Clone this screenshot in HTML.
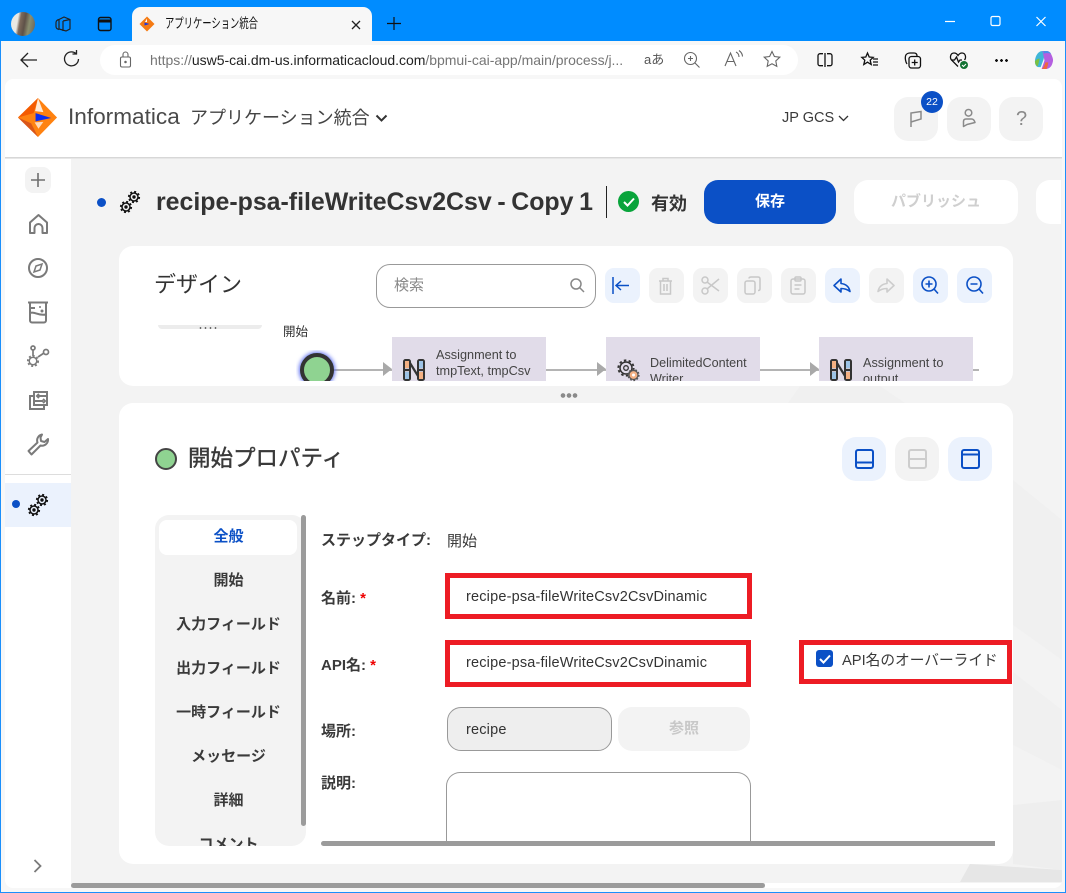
<!DOCTYPE html>
<html lang="ja"><head><meta charset="utf-8"><title>アプリケーション統合</title>
<style>
*{box-sizing:border-box}
html,body{margin:0;padding:0;width:1066px;height:893px;overflow:hidden;background:#1b8ffb}
body{position:relative;font-family:"Liberation Sans","Noto Sans CJK JP",sans-serif;color:#333}
.a{position:absolute}
.t{position:absolute;white-space:nowrap;line-height:1}
svg{position:absolute;overflow:visible}
.ib{position:absolute;width:35px;height:35px;border-radius:9px;background:#ebf2fd}
.ib.d{background:#f3f3f3}
.tab{position:absolute;left:0;width:100%;text-align:center;font-size:15px;font-weight:700;color:#3a3a3a;line-height:1}
.red{position:absolute;border:5px solid #ed1c24}
</style></head><body>
<!-- window background -->
<div class="a" style="left:1px;top:41px;width:1064px;height:851px;background:#f7f7f7"></div>
<!-- title bar -->
<div class="a" style="left:0;top:0;width:1066px;height:41px;background:#008cff"></div>
<div class="a" style="left:11px;top:12px;width:24px;height:24px;border-radius:50%;background:linear-gradient(100deg,#e9e9e4 0 28%,#7d6a5c 38%,#5e5148 55%,#8a8f70 72%,#68605a 100%)"></div>
<svg style="left:54px;top:15px" width="18" height="18" fill="none" stroke="#222" stroke-width="1.200"><path d="M5 4.500l5-2.500 6 2.500v9.500l-4 2-7-2z M9 6l7-1.500M9 6v10M5 4.500c-2 .5-3 1.500-3 3v4c0 1.500 1 2.500 3 3"/></svg>
<svg style="left:97px;top:16px" width="18" height="16" fill="none" stroke="#111" stroke-width="1.400"><rect x="1.500" y="1.500" width="12.500" height="13" rx="2"/><path d="M1.500 5h12.500" stroke-width="3"/></svg>
<div class="a" style="left:132px;top:7px;width:240px;height:35px;background:#f7f7f7;border-radius:9px 9px 0 0"></div>
<svg style="left:139px;top:16px" width="16" height="16" viewBox="0 0 16 16"><path d="M8 .5L15.500 8 8 15.500.5 8z" fill="#f57a12"/><path d="M5.500 6.500l5 1.500-5 1.500z" fill="#1a35e0"/><path d="M8 2.500L6 6h2z" fill="#fff"/></svg>
<div class="t" style="left:165px;top:17px;font-size:13.500px;color:#111;transform:scaleX(.69);transform-origin:0 0">アプリケーション統合</div>
<svg style="left:350px;top:19px" width="12" height="12" stroke="#222" stroke-width="1.300"><path d="M2 2l8 8M10 2l-8 8"/></svg>
<svg style="left:387px;top:17px" width="14" height="14" stroke="#111" stroke-width="1.200"><path d="M7 0v13M0 6.500h14"/></svg>
<svg style="left:945px;top:20px" width="110" height="12" fill="none" stroke="#fff" stroke-width="1.200"><path d="M0 1.500h10"/><rect x="46" y="-3.500" width="9" height="9" rx="1.500"/><path d="M91.500-3l9 9M100.500-3l-9 9"/></svg>
<!-- toolbar -->
<svg style="left:20px;top:51px" width="18" height="18" fill="none" stroke="#222" stroke-width="1.300"><path d="M1 9h16M8 2L1 9l7 7"/></svg>
<svg style="left:63px;top:50px" width="18" height="18" fill="none" stroke="#222" stroke-width="1.300"><path d="M15.500 9a7 7 0 1 1-2.500-5.500M13.500 0v4h-4"/></svg>
<div class="a" style="left:100px;top:45px;width:698px;height:30px;background:#fff;border-radius:15px"></div>
<svg style="left:119px;top:51px" width="14" height="18" fill="none" stroke="#666" stroke-width="1.100"><rect x="1.500" y="6" width="10" height="10" rx="1.500"/><path d="M4 6V3.500a2.500 2.500 0 0 1 5 0V6"/><circle cx="6.500" cy="11" r=".7" fill="#666"/></svg>
<div class="t" style="left:150px;top:53px;font-size:14px;letter-spacing:-.02px;color:#757575">https://<span style="color:#222">usw5-cai.dm-us.informaticacloud.com</span>/bpmui-cai-app/main/process/j...</div>
<div class="t" style="left:644px;top:53px;font-size:13px;color:#555">aあ</div>
<svg style="left:683px;top:51px" width="18" height="18" fill="none" stroke="#666" stroke-width="1.100"><circle cx="7.500" cy="7.500" r="6"/><path d="M12 12l4.500 4.500M5 7.500h5M7.500 5v5"/></svg>
<svg style="left:724px;top:50px" width="20" height="18" fill="none" stroke="#666" stroke-width="1.100"><path d="M1 16L6.500 3 12 16M3 11.500h7M12 2c2 1 3 3 3 5M15 .5c2 1.500 3.500 3.500 3.500 6"/></svg>
<svg style="left:763px;top:50px" width="18" height="18" fill="none" stroke="#666" stroke-width="1.100"><path d="M9 1.500l2.400 5 5.400.7-4 3.800 1 5.400L9 13.800l-4.800 2.600 1-5.400-4-3.800 5.400-.7z"/></svg>
<svg style="left:817px;top:53px" width="16" height="14" fill="none" stroke="#111" stroke-width="1.300"><path d="M6 .7H3a2 2 0 0 0-2 2v8a2 2 0 0 0 2 2h3M10 .7h3a2 2 0 0 1 2 2v8a2 2 0 0 1-2 2h-3M8 0v14"/></svg>
<svg style="left:861px;top:52px" width="17" height="16" fill="none" stroke="#111" stroke-width="1.300"><path d="M6.500 1l1.700 4 4 .4-3 2.800 1 4.300-3.700-2.300-3.700 2.300 1-4.300-3-2.800 4-.4z"/><path d="M12 7h5M12 10h5M12 13h5"/></svg>
<svg style="left:904px;top:52px" width="18" height="17" fill="none" stroke="#111" stroke-width="1.300"><path d="M3 12C1.500 10 1 6 1.500 4 2 2 4 1 6 1h4c2 0 3 1 3 3"/><rect x="5" y="4.500" width="11.500" height="11.500" rx="2.500"/><path d="M10.700 7.500v6M7.700 10.500h6"/></svg>
<svg style="left:949px;top:51px" width="20" height="19" fill="none" stroke="#111" stroke-width="1.300"><path d="M9 15.500L2.500 9C.5 6.500 1.500 2 5 2c2 0 3.200 1 4 2.500C10 3 11 2 13 2c3.500 0 4.500 4.500 2.500 7M2 9h3.500l2-3 2 5 1.500-2h2"/><circle cx="15" cy="14" r="4" fill="#137333" stroke="none"/><path d="M13 14l1.500 1.500 2.500-2.500" stroke="#fff" stroke-width="1"/></svg>
<div class="a" style="left:994px;top:59px;width:15px;height:3px;background:radial-gradient(circle,#111 1.300px,transparent 1.500px) 0 0/5px 3px"></div>
<svg style="left:1033px;top:50px" width="22" height="20" viewBox="0 0 21 21"><path d="M1 12C1 7 4 1 9 1h3l-2 9-3 8H5c-3 0-4-3-4-6z" fill="#3fb6d8"/><path d="M9 1h4c3 0 5 2 6.500 7 .5 2 1 3-.5 7-1 3-4 5-6 5H8l3-9z" fill="#b45fe0"/><path d="M1 12c1-2 3-3 5-3l-2 8c-2 0-3-3-3-5z" fill="#7bc043"/><path d="M13 20H8c2-1 3-4 4-7l3 0c-.5 3-1 6-2 7z" fill="#f0663e"/><path d="M10 1h3c2 0 4 1 5 3-3-1-6-1-8 0z" fill="#4d8fe8"/></svg>
<!-- page -->
<div class="a" style="left:5px;top:79px;width:1057px;height:809px;background:#f3f3f3;border-radius:8px;overflow:hidden">
 <svg style="left:-5px;top:-79px" width="1066" height="893"><path d="M788 403L800 386H880L905 403z" fill="#f0f0f0"/><path d="M1013 480L1062 520V660L1013 625z" fill="#f0f0f0"/><path d="M1013 672L1062 710V770L1013 745z" fill="#f0f0f0"/><path d="M1013 805L1062 800V870L1013 864z" fill="#eeeeee"/><path d="M970 864L1062 870V882H960z" fill="#e6e6e6"/></svg>
 <div class="a" style="left:0;top:0;width:1057px;height:78px;background:#fff"></div>
 <div class="a" style="left:0;top:78px;width:1057px;height:2px;background:linear-gradient(#cfcfcf,#efefef)"></div>
 <div class="a" style="left:0;top:80px;width:66px;height:729px;background:#fff"></div>
 <div class="a" style="left:0;top:395px;width:66px;height:1px;background:#ddd"></div>
 <div class="a" style="left:0;top:404px;width:66px;height:44px;background:#ebf2fd"></div>
 <div class="a" style="left:66px;top:804px;width:694px;height:5px;background:#9b9b9b;border-radius:3px"></div>
 <div class="a" style="left:760px;top:804px;width:297px;height:5px;background:#fff"></div>
</div>
<!-- header -->
<svg style="left:18px;top:98px" width="40" height="40" viewBox="0 0 41 41"><path d="M20.500 0L40 20 20.500 40 0 20z" fill="#ff8210"/><path d="M20.500 0L0 20l16-4.500z" fill="#f45a00"/><path d="M0 20l20.500 20-7-14z" fill="#d9561a"/><path d="M20.500 0l-3 13.500 8.500 1z" fill="#ffe9d6"/><path d="M17 25l9-.5-5 7z" fill="#ffe9d6" opacity=".85"/><path d="M18 15.500L34 20.500 18 24z" fill="#0c2ef0"/></svg>
<div class="t" style="left:68px;top:106px;font-size:22.600px;color:#4a4a4a">Informatica</div>
<div class="t" style="left:190px;top:109px;font-size:18px;color:#444">アプリケーション統合</div>
<svg style="left:375px;top:114px" width="13" height="9" fill="none" stroke="#333" stroke-width="2"><path d="M1.500 1.500L6.500 6.500 11.500 1.500"/></svg>
<div class="t" style="left:782px;top:111px;font-size:14.500px;color:#3a3a3a">JP GCS</div>
<svg style="left:838px;top:115px" width="11" height="7" fill="none" stroke="#333" stroke-width="1.300"><path d="M1 1l4.500 4.500L10 1"/></svg>
<div class="ib d" style="left:894px;top:97px;width:44px;height:44px;border-radius:14px"></div>
<div class="ib d" style="left:947px;top:97px;width:44px;height:44px;border-radius:14px"></div>
<div class="ib d" style="left:999px;top:97px;width:44px;height:44px;border-radius:14px"></div>
<svg style="left:908px;top:110px" width="16" height="18" fill="none" stroke="#8a8a8a" stroke-width="1.500"><path d="M3 17V3l10-1.500V9L3 12"/></svg>
<div class="a" style="left:921px;top:91px;width:22px;height:22px;border-radius:50%;background:#0b50c6;color:#fff;font-size:10.500px;line-height:22px;text-align:center">22</div>
<svg style="left:960px;top:108px" width="18" height="20" fill="none" stroke="#8a8a8a" stroke-width="1.500"><circle cx="8.500" cy="4.800" r="3.300"/><path d="M3.500 18.500V13.500Q3.500 11 6 11H11.500Q14 11 15 14.500L7 16.500z" stroke-linejoin="round"/></svg>
<div class="t" style="left:1016px;top:109px;font-size:20px;color:#8a8a8a">?</div>
<!-- sidebar -->
<div class="a" style="left:25px;top:167px;width:26px;height:26px;border-radius:8px;background:#f3f3f3"></div>
<svg style="left:31px;top:173px" width="14" height="14" stroke="#6f6f6f" stroke-width="1.600"><path d="M7 0v14M0 7h14"/></svg>
<svg style="left:28px;top:213px" width="21" height="22" fill="none" stroke="#7a7a7a" stroke-width="2"><path d="M2 20h4.500v-5a4 4 0 0 1 8 0v5H19V9.500L10.500 2 2 9.500z" stroke-linejoin="round"/></svg>
<svg style="left:27px;top:257px" width="22" height="22" fill="none" stroke="#7a7a7a" stroke-width="2"><circle cx="11" cy="11" r="9"/><path d="M7 15l2-6 6-2-2 6z" stroke-width="1.500"/></svg>
<svg style="left:27px;top:301px" width="22" height="23" fill="none" stroke="#7a7a7a" stroke-width="2"><path d="M1 1.500h20M3 1.500v18a2 2 0 0 0 2 2h12a2 2 0 0 0 2-2V1.500M3 12c5-2 7 3 16 1.500M3 7h5"/><circle cx="13" cy="6" r="1" fill="#7a7a7a" stroke="none"/><circle cx="15" cy="10" r="1.500" fill="#7a7a7a" stroke="none"/></svg>
<svg style="left:27px;top:345px" width="23" height="24" fill="none" stroke="#7a7a7a" stroke-width="1.700"><circle cx="6" cy="16" r="3.800" stroke-width="1.500"/><circle cx="6" cy="16" r="5.200" stroke-width="1.700" stroke-dasharray="2 2"/><circle cx="6" cy="3" r="2"/><circle cx="19" cy="7" r="2.500"/><path d="M6 5v6M11 12l6-4"/></svg>
<svg style="left:28px;top:390px" width="21" height="21" fill="none" stroke="#7a7a7a" stroke-width="2"><path d="M6 15V2h13v13H6zM6 6H2v13h14v-4M10 6h8M7 11h8M11 4L9 6l2 2M15 9l2 2-2 2"/></svg>
<svg style="left:27px;top:433px" width="23" height="23" fill="none" stroke="#7a7a7a" stroke-width="2"><path d="M15 1.500a6 6 0 0 0-4.500 8L1.500 18l3 3.500 9-9a6 6 0 0 0 7.500-6.500l-3.500 3-3.500-1-.5-3.500z" stroke-linejoin="round"/></svg>
<div class="a" style="left:12px;top:500px;width:8px;height:8px;border-radius:50%;background:#0b50c6"></div>
<svg style="left:28px;top:494px" width="21" height="22" fill="none" stroke="#111"><circle cx="14" cy="6" r="4" stroke-width="1.500"/><circle cx="14" cy="6" r="5.300" stroke-width="1.600" stroke-dasharray="2 2.160"/><circle cx="14" cy="6" r="1.200" fill="#111"/><circle cx="6" cy="16" r="4" stroke-width="1.500"/><circle cx="6" cy="16" r="5.300" stroke-width="1.600" stroke-dasharray="2 2.160"/><circle cx="6" cy="16" r="1.200" fill="#111"/></svg>
<svg style="left:33px;top:859px" width="10" height="14" fill="none" stroke="#7a7a7a" stroke-width="1.800"><path d="M1.500 1l6 6-6 6"/></svg>
<!-- title row -->
<div class="a" style="left:97px;top:198px;width:9px;height:9px;border-radius:50%;background:#0b50c6"></div>
<svg style="left:120px;top:191px" width="21" height="22" fill="none" stroke="#111"><circle cx="14" cy="6" r="4" stroke-width="1.500"/><circle cx="14" cy="6" r="5.300" stroke-width="1.600" stroke-dasharray="2 2.160"/><circle cx="14" cy="6" r="1.200" fill="#111"/><circle cx="6" cy="16" r="4" stroke-width="1.500"/><circle cx="6" cy="16" r="5.300" stroke-width="1.600" stroke-dasharray="2 2.160"/><circle cx="6" cy="16" r="1.200" fill="#111"/></svg>
<div class="t" style="left:156px;top:190px;font-size:24.900px;font-weight:700;color:#333;word-spacing:-1.300px">recipe-psa-fileWriteCsv2Csv - Copy 1</div>
<div class="a" style="left:606px;top:186px;width:1px;height:32px;background:#222"></div>
<div class="a" style="left:618px;top:191px;width:21px;height:21px;border-radius:50%;background:#09a43b"></div>
<svg style="left:623px;top:197px" width="12" height="10" fill="none" stroke="#fff" stroke-width="2"><path d="M1 5l3.500 3.500L11 1.500"/></svg>
<div class="t" style="left:651px;top:195px;font-size:18px;font-weight:700;color:#333">有効</div>
<div class="a" style="left:704px;top:180px;width:132px;height:44px;border-radius:14px;background:#0b50c6;color:#fff;font-size:15px;font-weight:700;text-align:center;line-height:44px">保存</div>
<div class="a" style="left:854px;top:180px;width:164px;height:44px;border-radius:14px;background:#fff;color:#cfcfcf;font-size:15px;font-weight:700;text-align:center;line-height:44px">パブリッシュ</div>
<div class="a" style="left:1036px;top:180px;width:25px;height:44px;border-radius:14px 0 0 14px;background:#fff"></div>
<!-- design card -->
<div class="a" style="left:119px;top:246px;width:894px;height:140px;background:#fff;border-radius:14px"></div>
<div class="t" style="left:154px;top:274px;font-size:22px;color:#333">デザイン</div>
<div class="a" style="left:376px;top:264px;width:220px;height:44px;border:1px solid #999;border-radius:14px;background:#fff"></div>
<div class="t" style="left:394px;top:278px;font-size:15px;color:#8a8a8a">検索</div>
<svg style="left:570px;top:278px" width="15" height="15" fill="none" stroke="#888" stroke-width="1.500"><circle cx="6" cy="6" r="5"/><path d="M9.500 9.500L14 14"/></svg>
<div class="ib" style="left:605px;top:268px"></div>
<div class="ib d" style="left:649px;top:268px"></div>
<div class="ib d" style="left:693px;top:268px"></div>
<div class="ib d" style="left:737px;top:268px"></div>
<div class="ib d" style="left:781px;top:268px"></div>
<div class="ib" style="left:825px;top:268px"></div>
<div class="ib d" style="left:869px;top:268px"></div>
<div class="ib" style="left:913px;top:268px"></div>
<div class="ib" style="left:957px;top:268px"></div>
<svg style="left:612px;top:277px" width="20" height="18" fill="none" stroke="#0b50c6" stroke-width="1.500"><path d="M1 0v17M17 8.500H4M9 4L4 8.500 9 13"/></svg>
<svg style="left:657px;top:277px" width="18" height="18" fill="none" stroke="#c8c8c8" stroke-width="1.500"><path d="M2 4h13M6 4V1.500h5V4M3.500 4v13h10V4M7 7v7M10 7v7"/></svg>
<svg style="left:701px;top:276px" width="20" height="19" fill="none" stroke="#c8c8c8" stroke-width="1.500"><circle cx="4" cy="4" r="3"/><circle cx="4" cy="15" r="3"/><path d="M6 6l12 9M6 13L18 3"/></svg>
<svg style="left:744px;top:276px" width="18" height="19" fill="none" stroke="#c8c8c8" stroke-width="1.500"><rect x="1" y="5" width="10" height="13" rx="2"/><path d="M5 2.500Q5 1 7 1h7q2 0 2 2v10q0 1.500-2 1.500"/></svg>
<svg style="left:790px;top:276px" width="17" height="19" fill="none" stroke="#c8c8c8" stroke-width="1.500"><rect x="1" y="3" width="14" height="15" rx="2"/><rect x="5" y="1" width="6" height="4" rx="1"/><path d="M4.500 9h7M4.500 13h5"/></svg>
<svg style="left:833px;top:278px" width="18" height="16" fill="none" stroke="#0b50c6" stroke-width="1.600"><path d="M8 1L1 7.500 8 14v-3.500c4 0 6.500 1 9 3-1-5-4-7.500-9-8z" stroke-linejoin="round"/></svg>
<svg style="left:877px;top:278px" width="18" height="16" fill="none" stroke="#cdcdcd" stroke-width="1.600"><path d="M10 1l7 6.500L10 14v-3.500c-4 0-6.500 1-9 3 1-5 4-7.500 9-8z" stroke-linejoin="round"/></svg>
<svg style="left:921px;top:276px" width="18" height="19" fill="none" stroke="#0b50c6" stroke-width="1.600"><circle cx="8" cy="8" r="7"/><path d="M13 13l4 4.500M4.500 8h7M8 4.500v7"/></svg>
<svg style="left:966px;top:276px" width="18" height="19" fill="none" stroke="#0b50c6" stroke-width="1.600"><circle cx="8" cy="8" r="7"/><path d="M13 13l4 4.500M4.500 8h7"/></svg>
<!-- canvas -->
<div class="a" style="left:158px;top:325px;width:104px;height:4px;background:#ececec;border-radius:0 0 8px 8px"></div>
<div class="a" style="left:198px;top:327px;width:20px;height:2px;background:radial-gradient(circle,#555 .7px,transparent 1px) 0 0/5px 2px"></div>
<div class="t" style="left:283px;top:326px;font-size:12.500px;color:#333">開始</div>
<div class="a" style="left:332px;top:369px;width:647px;height:2px;background:#b4b4b4"></div>
<div class="a" style="left:296px;top:350px;width:44px;height:31px;overflow:hidden"><div class="a" style="left:4px;top:3px;width:34px;height:34px;border-radius:50%;background:#8fd391;border:4px solid #333;box-shadow:0 0 4px 1px #5a6cf0"></div></div>
<svg style="left:383px;top:362px" width="9" height="14"><path d="M0 0l9 7-9 7z" fill="#a9a9a9"/></svg>
<svg style="left:597px;top:362px" width="9" height="14"><path d="M0 0l9 7-9 7z" fill="#a9a9a9"/></svg>
<svg style="left:810px;top:362px" width="9" height="14"><path d="M0 0l9 7-9 7z" fill="#a9a9a9"/></svg>
<div class="a" style="left:392px;top:337px;width:154px;height:44px;background:#e1dce9"></div>
<div class="a" style="left:606px;top:337px;width:154px;height:44px;background:#e1dce9"></div>
<div class="a" style="left:819px;top:337px;width:154px;height:44px;background:#e1dce9"></div>
<svg style="left:403px;top:359px" width="22" height="22" fill="none" stroke="#333" stroke-width="2"><rect x="1" y="1" width="6" height="20" rx="1.500"/><rect x="15" y="1" width="6" height="20" rx="1.500"/><rect x="2" y="2" width="4" height="7" fill="#f4b183" stroke="none"/><rect x="2" y="13" width="4" height="7" fill="#9dc3e6" stroke="none"/><rect x="16" y="2" width="4" height="7" fill="#9dc3e6" stroke="none"/><rect x="16" y="13" width="4" height="7" fill="#f4b183" stroke="none"/><path d="M1 11h6M15 11h6M7 4l8 13" stroke-width="2.200"/></svg>
<svg style="left:830px;top:359px" width="22" height="22" fill="none" stroke="#333" stroke-width="2"><rect x="1" y="1" width="6" height="20" rx="1.500"/><rect x="15" y="1" width="6" height="20" rx="1.500"/><rect x="2" y="2" width="4" height="7" fill="#f4b183" stroke="none"/><rect x="2" y="13" width="4" height="7" fill="#9dc3e6" stroke="none"/><rect x="16" y="2" width="4" height="7" fill="#9dc3e6" stroke="none"/><rect x="16" y="13" width="4" height="7" fill="#f4b183" stroke="none"/><path d="M1 11h6M15 11h6M7 4l8 13" stroke-width="2.200"/></svg>
<svg style="left:617px;top:359px" width="23" height="22" fill="none"><circle cx="9" cy="9" r="6" stroke="#333" stroke-width="1.500"/><circle cx="9" cy="9" r="7.700" stroke="#333" stroke-width="1.800" stroke-dasharray="2.500 2.340"/><circle cx="9" cy="9" r="2.300" stroke="#333" stroke-width="1.300"/><circle cx="16.500" cy="16" r="4.500" fill="#f4b183" stroke="#555" stroke-width="1.200"/><circle cx="16.500" cy="16" r="5.500" stroke="#555" stroke-width="1.200" stroke-dasharray="1.800 1.660"/><circle cx="16.500" cy="16" r="1.500" fill="#fff"/></svg>
<div class="t" style="left:436px;top:347px;font-size:12.700px;line-height:16px;color:#444;width:108px;height:34px;overflow:hidden">Assignment to<br>tmpText, tmpCsv</div>
<div class="t" style="left:650px;top:355px;font-size:12.600px;line-height:16px;color:#444;height:26px;overflow:hidden">DelimitedContent<br>Writer</div>
<div class="t" style="left:863px;top:355px;font-size:12.700px;line-height:16px;color:#444;height:26px;overflow:hidden">Assignment to<br>output</div>
<div class="a" style="left:560px;top:393px;width:18px;height:5px;background:radial-gradient(circle,#8a8a8a 2.100px,transparent 2.500px) 0 0/6px 5px"></div>
<!-- properties card -->
<div class="a" style="left:119px;top:403px;width:894px;height:461px;background:#fff;border-radius:14px"></div>
<div class="a" style="left:155px;top:448px;width:22px;height:22px;border-radius:50%;background:#8fd391;border:2px solid #444"></div>
<div class="t" style="left:188px;top:448px;font-size:22.500px;color:#3a3a3a;-webkit-text-stroke:.4px #3a3a3a">開始プロパティ</div>
<div class="ib" style="left:842px;top:437px;width:44px;height:44px;border-radius:14px"></div>
<div class="ib d" style="left:895px;top:437px;width:44px;height:44px;border-radius:14px"></div>
<div class="ib" style="left:948px;top:437px;width:44px;height:44px;border-radius:14px"></div>
<svg style="left:855px;top:449px" width="19" height="20" fill="none" stroke="#0b50c6" stroke-width="2"><rect x="1" y="1" width="17" height="18" rx="2"/><path d="M1 13.500h17"/></svg>
<svg style="left:908px;top:449px" width="19" height="20" fill="none" stroke="#cdcdcd" stroke-width="2"><rect x="1" y="1" width="17" height="18" rx="2"/><path d="M1 10h17"/></svg>
<svg style="left:961px;top:449px" width="19" height="20" fill="none" stroke="#0b50c6" stroke-width="2"><rect x="1" y="1" width="17" height="18" rx="2"/><path d="M1 5.500h17"/></svg>
<!-- tabs -->
<div class="a" style="left:155px;top:515px;width:151px;height:331px;background:#f3f3f3;border-radius:14px;overflow:hidden">
 <div class="a" style="left:4px;top:5px;width:138px;height:35px;background:#fff;border-radius:8px"></div>
 <div class="tab" style="top:14px;width:147px;color:#0b50c6">全般</div>
 <div class="tab" style="top:58px;width:147px">開始</div>
 <div class="tab" style="top:102px;width:147px">入力フィールド</div>
 <div class="tab" style="top:146px;width:147px">出力フィールド</div>
 <div class="tab" style="top:190px;width:147px">一時フィールド</div>
 <div class="tab" style="top:234px;width:147px">メッセージ</div>
 <div class="tab" style="top:278px;width:147px">詳細</div>
 <div class="tab" style="top:322px;width:147px">コメント</div>
</div>
<div class="a" style="left:301px;top:515px;width:5px;height:311px;background:#9b9b9b;border-radius:3px"></div>
<!-- form -->
<div class="t" style="left:321px;top:533px;font-size:15px;font-weight:700;color:#3a3a3a">ステップタイプ:</div>
<div class="t" style="left:447px;top:534px;font-size:15px;color:#3a3a3a">開始</div>
<div class="t" style="left:321px;top:591px;font-size:15px;font-weight:700;color:#3a3a3a">名前: <span style="color:#e00">*</span></div>
<div class="t" style="left:321px;top:658px;font-size:15px;font-weight:700;color:#3a3a3a">API名: <span style="color:#e00">*</span></div>
<div class="t" style="left:321px;top:724px;font-size:15px;font-weight:700;color:#3a3a3a">場所:</div>
<div class="t" style="left:321px;top:776px;font-size:15px;font-weight:700;color:#3a3a3a">説明:</div>
<div class="red" style="left:445px;top:573px;width:307px;height:46px"></div>
<div class="red" style="left:445px;top:640px;width:306px;height:47px"></div>
<div class="red" style="left:799px;top:640px;width:213px;height:44px"></div>
<div class="t" style="left:466px;top:590px;font-size:14.500px;letter-spacing:.18px;color:#333">recipe-psa-fileWriteCsv2CsvDinamic</div>
<div class="t" style="left:466px;top:656px;font-size:14.500px;letter-spacing:.18px;color:#333">recipe-psa-fileWriteCsv2CsvDinamic</div>
<div class="a" style="left:816px;top:650px;width:17px;height:17px;border-radius:3px;background:#0b50c6"></div>
<svg style="left:819px;top:654px" width="12" height="10" fill="none" stroke="#fff" stroke-width="2"><path d="M1 5l3.500 3.500L11 1.500"/></svg>
<div class="t" style="left:842px;top:654px;font-size:14.700px;color:#3a3a3a">API名のオーバーライド</div>
<div class="a" style="left:447px;top:707px;width:165px;height:44px;background:#eee;border:1px solid #999;border-radius:14px"></div>
<div class="t" style="left:466px;top:723px;font-size:14.500px;letter-spacing:.18px;color:#333">recipe</div>
<div class="a" style="left:618px;top:707px;width:132px;height:44px;background:#f3f3f3;border-radius:14px;color:#c8c8c8;font-size:15px;font-weight:700;text-align:center;line-height:44px">参照</div>
<div class="a" style="left:446px;top:772px;width:305px;height:70px;border:1px solid #999;border-bottom:0;border-radius:14px 14px 0 0;background:#fff"></div>
<div class="a" style="left:321px;top:841px;width:674px;height:5px;background:#9b9b9b;border-radius:3px 0 0 3px"></div>
</body></html>
